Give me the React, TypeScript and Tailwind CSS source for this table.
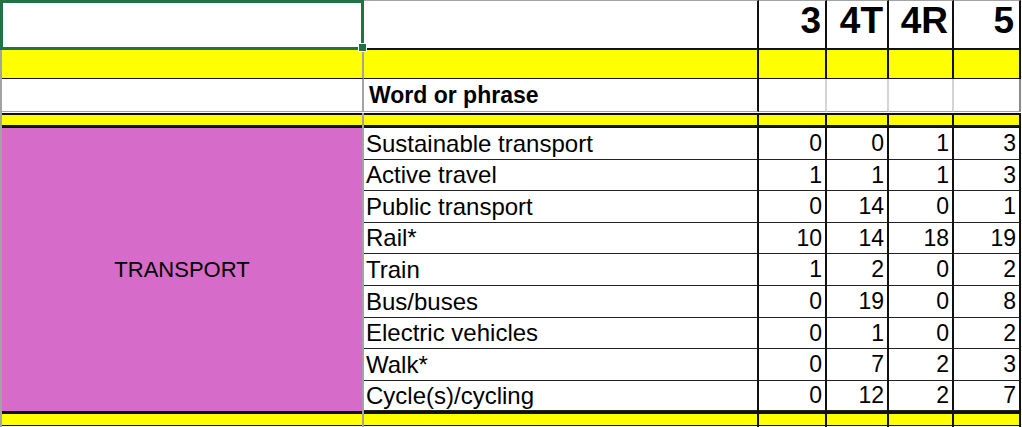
import React from "react";

const rows: [string, string, string, string, string][] = [
  ["Sustainable transport", "0", "0", "1", "3"],
  ["Active travel", "1", "1", "1", "3"],
  ["Public transport", "0", "14", "0", "1"],
  ["Rail*", "10", "14", "18", "19"],
  ["Train", "1", "2", "0", "2"],
  ["Bus/buses", "0", "19", "0", "8"],
  ["Electric vehicles", "0", "1", "0", "2"],
  ["Walk*", "0", "7", "2", "3"],
  ["Cycle(s)/cycling", "0", "12", "2", "7"],
];

const heights = ["h-[32px]", "h-[31px]", "h-[32px]", "h-[31px]", "h-[32px]", "h-[32px]", "h-[31px]", "h-[32px]", "h-[30px]"];

export default function App() {
  return (
    <div className="relative w-[1022px] h-[427px] overflow-hidden bg-white font-['Liberation_Sans',Arial,sans-serif] text-black">
      <div className="flex flex-col border-l-2 border-[#a3a3a3] w-[1021px]">
        {/* Row 1 */}
        <div className="flex h-[50px]">
          <div className="w-[362px] border-r-2 border-[#a3a3a3] bg-white" />
          <div className="w-[395px] border-t border-r-2 border-b-2 border-t-[#a3a3a3] border-r-[#111] border-b-[#111]" />
          <div className="w-[68px] flex items-end justify-end pr-[4px] pb-0 border-t border-r-2 border-b-2 border-t-[#a3a3a3] border-r-[#111] border-b-[#111] text-[37px] font-bold leading-normal">3</div>
          <div className="w-[62px] flex items-end justify-end pr-[4px] pb-0 border-t border-r-2 border-b-2 border-t-[#a3a3a3] border-r-[#111] border-b-[#111] text-[37px] font-bold leading-normal">4T</div>
          <div className="w-[65px] flex items-end justify-end pr-[4px] pb-0 border-t border-r-2 border-b-2 border-t-[#a3a3a3] border-r-[#111] border-b-[#111] text-[37px] font-bold leading-normal">4R</div>
          <div className="w-[67px] flex items-end justify-end pr-[5px] pb-0 border-t border-r-2 border-b-2 border-t-[#a3a3a3] border-r-[#111] border-b-[#111] text-[37px] font-bold leading-normal">5</div>
        </div>
        {/* Row 2 yellow */}
        <div className="flex h-[29px] bg-[#ffff00]">
          <div className="w-[362px] border-r-2 border-b border-r-[#a3a3a3] border-b-[#111]" />
          <div className="w-[395px] border-r-2 border-b border-[#111]" />
          <div className="w-[68px] border-r-2 border-b border-[#111]" />
          <div className="w-[62px] border-r-2 border-b border-[#111]" />
          <div className="w-[65px] border-r-2 border-b border-[#111]" />
          <div className="w-[67px] border-r-2 border-b border-[#111]" />
        </div>
        {/* Row 3 header */}
        <div className="flex h-[33px]">
          <div className="w-[362px] border-r-2 border-b border-[#a3a3a3]" />
          <div className="w-[395px] flex items-center pl-[5px] border-r-2 border-b border-r-[#111] border-b-[#a3a3a3] text-[23px] font-bold">Word or phrase</div>
          <div className="w-[68px] border-r-2 border-b border-r-[#d4d4d4] border-b-[#a3a3a3]" />
          <div className="w-[62px] border-r-2 border-b border-r-[#d4d4d4] border-b-[#a3a3a3]" />
          <div className="w-[65px] border-r-2 border-b border-r-[#d4d4d4] border-b-[#a3a3a3]" />
          <div className="w-[67px] border-r-2 border-b border-r-[#8a8a8a] border-b-[#a3a3a3]" />
        </div>
        {/* Row 4 thin yellow */}
        <div className="flex h-[16px] pt-[1px]">
          <div className="w-[362px] border-r-2 border-r-[#a3a3a3] flex flex-col">
            <div className="h-[2px] bg-[#111]" />
            <div className="h-[10px] bg-[#ffff00]" />
            <div className="h-[3px] bg-[#111]" />
          </div>
          {["w-[395px]", "w-[68px]", "w-[62px]", "w-[65px]", "w-[67px]"].map((w, i) => (
            <div key={i} className={`${w} border-r-2 border-r-[#111] flex flex-col`}>
              <div className="h-[2px] bg-[#111]" />
              <div className="h-[10px] bg-[#ffff00]" />
              <div className="h-[3px] bg-[#111]" />
            </div>
          ))}
        </div>
        {/* Data block */}
        <div className="flex">
          <div className="w-[362px] border-r-2 border-[#a3a3a3] bg-[#d66bc9] flex items-center justify-center text-[22px]">
            TRANSPORT
          </div>
          <div className="flex flex-col">
            {rows.map((r, i) => (
              <div key={i} className={`flex ${heights[i]}`}>
                <div className="w-[395px] flex items-center pl-[2px] border-r-2 border-b border-r-[#111] border-b-[#222] text-[24px]">{r[0]}</div>
                <div className="w-[68px] flex items-center justify-end pr-[3px] border-r-2 border-b border-r-[#111] border-b-[#222] text-[23px]">{r[1]}</div>
                <div className="w-[62px] flex items-center justify-end pr-[3px] border-r-2 border-b border-r-[#111] border-b-[#222] text-[23px]">{r[2]}</div>
                <div className="w-[65px] flex items-center justify-end pr-[3px] border-r-2 border-b border-r-[#111] border-b-[#222] text-[23px]">{r[3]}</div>
                <div className="w-[67px] flex items-center justify-end pr-[3px] border-r-2 border-b border-r-[#111] border-b-[#222] text-[23px]">{r[4]}</div>
              </div>
            ))}
          </div>
        </div>
        {/* Bottom */}
        <div className="flex h-[16px]">
          <div className="w-[362px] border-r-2 border-r-[#a3a3a3] flex flex-col">
            <div className="h-[3px] bg-[#111]" />
            <div className="h-[11px] bg-[#ffff00]" />
            <div className="h-[1px] bg-[#111]" />
          </div>
          {["w-[395px]", "w-[68px]", "w-[62px]", "w-[65px]", "w-[67px]"].map((w, i) => (
            <div key={i} className={`${w} border-r-2 border-r-[#111] flex flex-col`}>
              <div className="h-[3px] bg-[#111]" />
              <div className="h-[11px] bg-[#ffff00]" />
              <div className="h-[1px] bg-[#111]" />
            </div>
          ))}
        </div>
      </div>
      {/* selection */}
      <div className="absolute left-0 top-0 w-[364px] h-[50px] border-[3px] border-[#217346] pointer-events-none" />
      <div className="absolute left-[358px] top-[43px] w-[9px] h-[9px] bg-[#217346] border border-white" />
    </div>
  );
}
